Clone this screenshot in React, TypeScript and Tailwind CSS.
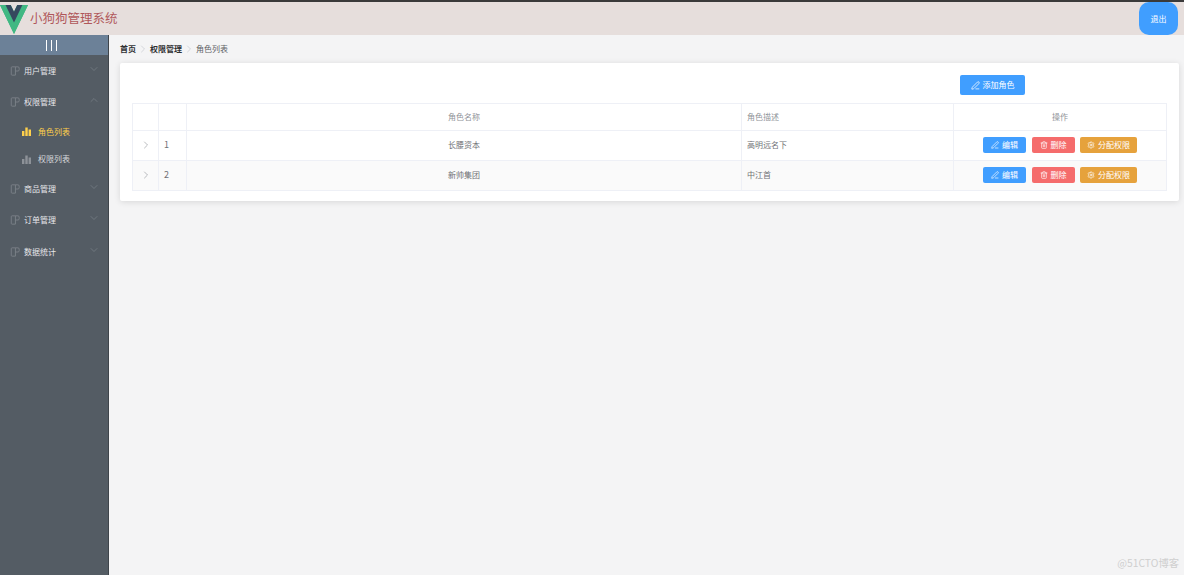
import { ChevronDown, ChevronRight, ChevronUp, PenLine, Settings, Trash2 } from "lucide-react";

const font = "font-['Noto_Sans_CJK_SC','Liberation_Sans',sans-serif]";

const roles = [
  { id: 1, name: "长腰资本", desc: "高明远名下" },
  { id: 2, name: "新帅集团", desc: "中江首" },
];

function VueLogo() {
  return (
    <svg viewBox="0 0 256 221" className="mt-px h-[29px] w-[28px] shrink-0" preserveAspectRatio="none">
      <path fill="#41b883" d="M204.8 0H256L128 220.8 0 0h97.92L128 51.2 157.44 0h47.36Z" />
      <path fill="#41b883" d="M0 0l128 220.8L256 0h-51.2L128 132.48 50.56 0H0Z" />
      <path fill="#35495e" d="M50.56 0L128 133.12 204.8 0h-47.36L128 51.2 97.92 0H50.56Z" />
    </svg>
  );
}

function DocIcon() {
  return (
    <svg viewBox="0 0 12 12" className="h-[10px] w-[10px] shrink-0" fill="none" stroke="#80868d" strokeWidth="1">
      <path d="M6.5 1H2.5a1 1 0 0 0-1 1v8a1 1 0 0 0 1 1h4V1Z" />
      <path d="M6.5 1h3a1.5 1.5 0 0 1 1.5 1.5v2A1.5 1.5 0 0 1 9.5 6h-3" />
    </svg>
  );
}

// solid bars, like element-ui's el-icon-s-data
function DataIcon({ active }: { active?: boolean }) {
  return (
    <svg viewBox="0 0 9 9" className={`h-[9px] w-[9px] shrink-0 ${active ? "fill-[#ffd04b]" : "fill-[#8d9298]"}`}>
      <rect x="0" y="4" width="2.4" height="5" />
      <rect x="3.3" y="0.5" width="2.4" height="8.5" />
      <rect x="6.6" y="2.5" width="2.4" height="6.5" />
    </svg>
  );
}

function MenuItem({ label, open }: { label: string; open?: boolean }) {
  const Chevron = open ? ChevronUp : ChevronDown;
  return (
    <div className="flex h-[31.5px] items-center pl-[10px] pr-2 text-[8px] text-[#e6e6ea]">
      <DocIcon />
      <span className="ml-1">{label}</span>
      <Chevron strokeWidth={1.25} className="ml-auto -mt-1 h-3 w-3 text-[#7f868d]" />
    </div>
  );
}

function SubItem({ label, active }: { label: string; active?: boolean }) {
  return (
    <div className={`flex h-[27.5px] items-center pl-[22px] text-[8px] ${active ? "text-[#ffd04b]" : "text-[#d5d7da]"}`}>
      <DataIcon active={active} />
      <span className="ml-[7px]">{label}</span>
    </div>
  );
}

function ActionButton({ color, icon, label, width }: { color: string; icon: React.ReactNode; label: string; width: string }) {
  return (
    <button className={`flex h-4 items-center justify-center gap-[3px] rounded-[2px] text-[8px] text-white ${color} ${width}`}>
      {icon}
      {label}
    </button>
  );
}

export default function App() {
  return (
    <div className={`flex h-[575px] w-[1184px] flex-col overflow-hidden bg-[#f4f4f5] ${font}`}>
      {/* Header */}
      <header className="flex h-[35px] shrink-0 items-center border-t-2 border-[#3a3a3a] bg-[#e6dedc]">
        <VueLogo />
        <span className="ml-[2px] text-[12.5px] text-[#b0575a]">小狗狗管理系统</span>
        <button className="ml-auto mr-[6px] h-[33px] w-[39px] rounded-[10px] bg-[#409eff] text-[8px] text-white">退出</button>
      </header>

      <div className="flex min-h-0 flex-1">
        {/* Sidebar */}
        <aside className="w-[109px] shrink-0 border-r border-[#3f454b] bg-[#545c64]">
          <div className="flex h-5 items-center justify-center gap-1 bg-[#6c8198] pr-[5px]">
            <i className="h-[11px] w-px bg-white" />
            <i className="h-[11px] w-px bg-white" />
            <i className="h-[11px] w-px bg-white" />
          </div>
          <MenuItem label="用户管理" />
          <MenuItem label="权限管理" open />
          <SubItem label="角色列表" active />
          <SubItem label="权限列表" />
          <MenuItem label="商品管理" />
          <MenuItem label="订单管理" />
          <MenuItem label="数据统计" />
        </aside>

        {/* Main */}
        <main className="relative flex-1 pl-[11px] pr-[6px] pt-[9px]">
          <nav className="flex h-[10px] items-center text-[8px]">
            <span className="font-bold text-[#303133]">首页</span>
            <ChevronRight strokeWidth={1.25} className="mx-px h-3 w-3 text-[#c0c4cc]" />
            <span className="font-bold text-[#303133]">权限管理</span>
            <ChevronRight strokeWidth={1.25} className="mx-px h-3 w-3 text-[#c0c4cc]" />
            <span className="text-[#606266]">角色列表</span>
          </nav>

          <section className="mt-[9px] h-[138px] rounded-[2px] bg-white p-3 shadow-[0_1px_6px_rgba(0,0,0,0.12)]">
            <div className="flex h-5 pl-[828px]">
              <button className="flex h-5 w-[65px] items-center justify-center gap-[3px] rounded-[2px] bg-[#409eff] text-[8px] text-white">
                <PenLine className="h-[9px] w-[9px]" />
                添加角色
              </button>
            </div>

            <table className="mt-2 w-[1034px] table-fixed border-collapse text-[8px] text-[#6f7175]">
              <colgroup>
                <col className="w-[26px]" />
                <col className="w-[28px]" />
                <col className="w-[555px]" />
                <col className="w-[212px]" />
                <col className="w-[213px]" />
              </colgroup>
              <thead>
                <tr className="h-[27px] text-[#909399]">
                  <th className="border border-[#eef0f6]" />
                  <th className="border border-[#eef0f6]" />
                  <th className="border border-[#eef0f6] font-normal">角色名称</th>
                  <th className="border border-[#eef0f6] pl-[5px] text-left font-normal">角色描述</th>
                  <th className="border border-[#eef0f6] font-normal">操作</th>
                </tr>
              </thead>
              <tbody>
                {roles.map((role) => (
                  <tr key={role.id} className={`h-[30px] ${role.id === 2 ? "bg-[#fafafa]" : ""}`}>
                    <td className="border border-[#eef0f6] pb-[2px] pl-[7px]">
                      <ChevronRight strokeWidth={1.25} className="h-3 w-3 text-[#909399]" />
                    </td>
                    <td className="border border-[#eef0f6] pb-[2px] pl-[5px] text-[9px]">{role.id}</td>
                    <td className="border border-[#eef0f6] pb-[2px] text-center">{role.name}</td>
                    <td className="border border-[#eef0f6] pb-[2px] pl-[5px]">{role.desc}</td>
                    <td className="border border-[#eef0f6] pb-[2px]">
                      <div className="flex justify-center gap-[5.5px]">
                        <ActionButton color="bg-[#409eff]" width="w-[43px]" icon={<PenLine className="h-2 w-2" />} label="编辑" />
                        <ActionButton color="bg-[#f56c6c]" width="w-[43px]" icon={<Trash2 className="h-2 w-2" />} label="删除" />
                        <ActionButton color="bg-[#e6a23c]" width="w-[57px]" icon={<Settings className="h-2 w-2" />} label="分配权限" />
                      </div>
                    </td>
                  </tr>
                ))}
              </tbody>
            </table>
          </section>

          <span className="absolute bottom-[5px] right-[6px] text-[10.3px] text-[#cfcfcf]">@51CTO博客</span>
        </main>
      </div>
    </div>
  );
}
